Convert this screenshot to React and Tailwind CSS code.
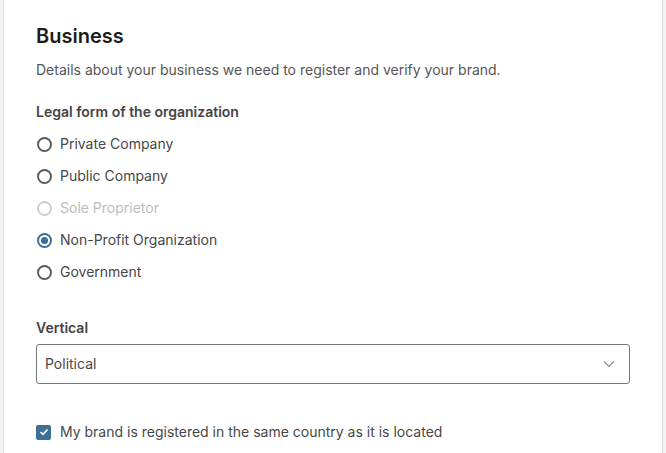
import React from "react";

const options = [
  { label: "Private Company" },
  { label: "Public Company" },
  { label: "Sole Proprietor", disabled: true },
  { label: "Non-Profit Organization", checked: true },
  { label: "Government" },
];

const Radio = ({ label, checked = false, disabled = false }) => (
  <label className="flex items-center h-8 gap-2">
    <span
      className={`flex items-center justify-center w-[15px] h-[15px] rounded-full border-2 ${
        disabled
          ? "border-[#cfcfcf]"
          : checked
            ? "border-[#3b6d96]"
            : "border-[#5a5a5a]"
      }`}
    >
      {checked && <span className="w-[7px] h-[7px] rounded-full bg-[#3b6d96]" />}
    </span>
    <span className={`text-sm ${disabled ? "text-[#bdbdbd]" : "text-[#474747]"}`}>
      {label}
    </span>
  </label>
);

export default function App() {
  return (
    <div
      className="w-[666px] h-[453px] bg-[#f3f3f3] pl-[3px] pr-[3px] overflow-hidden"
      style={{ fontFamily: "Inter, 'Noto Sans', sans-serif" }}
    >
      <div className="h-full bg-white border-l border-r border-[#dedede] pl-8 pr-8 pt-[22px]">
        <h2 className="text-xl leading-7 font-semibold text-[#1c1c1c]">Business</h2>
        <p className="mt-[10px] text-sm leading-5 text-[#555555]">
          Details about your business we need to register and verify your brand.
        </p>

        <p className="mt-[22px] text-sm leading-5 font-semibold text-[#444444]">
          Legal form of the organization
        </p>
        <div className="mt-[6px] flex flex-col pl-px">
          {options.map((o) => (
            <Radio key={o.label} {...o} />
          ))}
        </div>

        <p className="mt-[30px] text-sm leading-5 font-semibold text-[#444444]">Vertical</p>
        <div className="mt-[6px] w-[594px] h-10 border border-[#777777] rounded-[3px] flex items-center justify-between pl-2 pr-[14px]">
          <span className="text-sm text-[#474747]">Political</span>
          <svg width="12" height="8" viewBox="0 0 12 8" fill="none">
            <path d="M1 1.5 L6 6.5 L11 1.5" stroke="#8a8a8a" strokeWidth="1.2" />
          </svg>
        </div>

        <label className="mt-[38px] flex items-center gap-[9px] h-5">
          <span className="w-[15px] h-[15px] rounded-[2px] bg-[#3e6f97] flex items-center justify-center">
            <svg width="10" height="8" viewBox="0 0 10 8" fill="none">
              <path d="M1.5 4 L4 6.3 L8.5 1.5" stroke="white" strokeWidth="1.6" />
            </svg>
          </span>
          <span className="text-sm text-[#474747]">
            My brand is registered in the same country as it is located
          </span>
        </label>
      </div>
    </div>
  );
}
